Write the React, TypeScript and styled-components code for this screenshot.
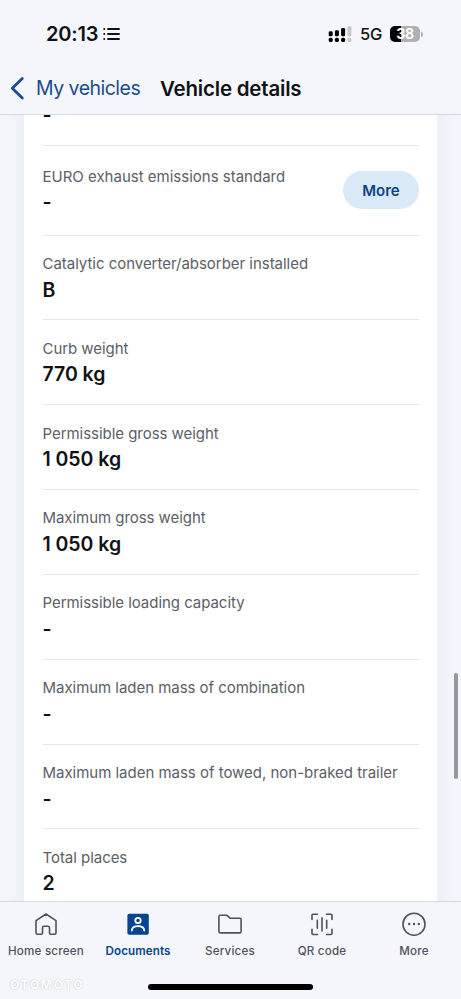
import React from "react";
import styled, { createGlobalStyle } from "styled-components";

const GlobalStyle = createGlobalStyle`
  * { box-sizing: border-box; }
  body { margin: 0; background: #f4f6fb; }
`;

const Screen = styled.div`
  position: relative;
  width: 461px;
  height: 999px;
  overflow: hidden;
  display: flex;
  flex-direction: column;
  background: #f4f6fb;
  color: #101216;
  font-family: Inter, "Liberation Sans", sans-serif;
  white-space: nowrap;
`;

const Header = styled.header`
  flex: none;
  height: 115px;
  border-bottom: 1px solid #d6d8dd;
`;

const StatusBar = styled.div`
  height: 66px;
  padding: 2px 38px 0 46px;
  display: flex;
  align-items: center;
  justify-content: space-between;
`;

const StatusGroup = styled.div`
  display: flex;
  align-items: center;
`;

const Clock = styled.span`
  font-size: 20px;
  font-weight: 600;
  letter-spacing: -0.2px;
  margin-right: 5px;
`;

const Network = styled.span`
  font-size: 16.5px;
  font-weight: 450;
  letter-spacing: -0.3px;
  margin: 0 8px 0 8px;
`;

const Battery = styled.div`
  width: 30px;
  height: 16px;
  border-radius: 5px;
  background: linear-gradient(to right, #000 38%, #b0b1b5 38%);
  color: #fff;
  font-size: 14px;
  font-weight: 700;
  line-height: 16.5px;
  text-align: center;
  letter-spacing: -0.3px;
`;

const BatteryTip = styled.div`
  width: 2px;
  height: 5px;
  margin-left: 1px;
  border-radius: 0 2px 2px 0;
  background: #b0b1b5;
`;

const NavBar = styled.div`
  height: 48px;
  padding: 0 0 4px 10px;
  display: flex;
  align-items: center;
`;

const BackLink = styled.span`
  width: 124px;
  margin-left: 11px;
  color: #194c8a;
  font-size: 19.5px;
  letter-spacing: -0.52px;
`;

const Title = styled.h1`
  margin: 0;
  font-size: 20.5px;
  font-weight: 600;
  letter-spacing: -0.2px;
`;

const Content = styled.main`
  flex: none;
  height: 786px;
  overflow: hidden;
  padding: 0 24px;
`;

const Card = styled.section`
  height: 900px;
  margin-top: -54px;
  padding: 0 18px 0 18.5px;
  background: #fff;
  box-shadow: 0 0 22px rgba(40, 70, 120, 0.07);
`;

const Row = styled.div<{ $height?: number }>`
  height: ${(p) => p.$height ?? 84.83}px;
  display: flex;
  align-items: center;
  justify-content: space-between;
  border-bottom: 1px solid #e4e5e8;
`;

const Field = styled.div`
  display: flex;
  flex-direction: column;
  gap: 2.6px;
  padding-top: 1.6px;
`;

const Label = styled.div<{ $spacing?: number }>`
  height: 20px;
  line-height: 20px;
  font-size: 15px;
  color: #5b5e66;
  letter-spacing: ${(p) => p.$spacing ?? 0}px;
`;

const Value = styled.div`
  height: 26px;
  line-height: 26px;
  font-size: 19.5px;
  font-weight: 600;
  letter-spacing: -0.05px;
`;

const MoreButton = styled.button`
  width: 76px;
  height: 38px;
  padding: 0;
  border: 0;
  border-radius: 19px;
  background: #dae9f8;
  color: #0c4386;
  font: 600 15px Inter, sans-serif;
`;

const TabBar = styled.nav`
  flex: none;
  height: 98px;
  padding-right: 1px;
  border-top: 1px solid #d6d8dd;
  display: flex;
`;

const Tab = styled.div<{ $active?: boolean }>`
  flex: 1;
  padding-top: 10px;
  display: flex;
  flex-direction: column;
  align-items: center;
  color: ${(p) => (p.$active ? "#06448f" : "#4f525b")};
`;

const TabLabel = styled.span<{ $active?: boolean }>`
  margin-top: 7px;
  font-size: 11.6px;
  line-height: 16px;
  font-weight: ${(p) => (p.$active ? 600 : 500)};
  letter-spacing: ${(p) => (p.$active ? 0.1 : 0.22)}px;
`;

const HomeIndicator = styled.div`
  position: absolute;
  left: 148px;
  top: 984px;
  width: 165px;
  height: 6px;
  border-radius: 3px;
  background: #000;
`;

const ScrollThumb = styled.div`
  position: absolute;
  left: 454px;
  top: 673px;
  width: 4px;
  height: 106px;
  border-radius: 2px;
  background: #97989c;
`;

const Watermark = styled.div`
  position: absolute;
  left: 10px;
  top: 977px;
  font-size: 12px;
  line-height: 15px;
  font-weight: 700;
  letter-spacing: 1.7px;
  color: #fff;
  text-shadow: 0 0 1.5px #b4b5bb;
`;

const ListIcon = () => (
  <svg width="17" height="14" viewBox="0 0 17 14" stroke="#101216" strokeWidth="1.9" strokeLinecap="round">
    <path d="M5 2H16M5 7H16M5 12H16M1.2 2H1.3M1.2 7H1.3M1.2 12H1.3" />
  </svg>
);

const SignalIcon = () => (
  <svg width="24" height="17" viewBox="0 0 24 17">
    {[
      [0.7, 5.2],
      [6.9, 4.2],
      [13.1, 2],
      [19.4, 0.3],
    ].map(([x, y], i) => (
      <g key={x} fill={i === 3 ? "#c6c7cb" : "#000"}>
        <rect x={x} y={y} width="4" height={10.2 - y} rx="1.3" />
        <rect x={x} y="11.8" width="4" height="4.2" rx="1.5" />
      </g>
    ))}
  </svg>
);

const BackIcon = () => (
  <svg width="15" height="24" viewBox="0 0 15 24" fill="none" stroke="#194c8a" strokeWidth="2.8" strokeLinecap="round" strokeLinejoin="round">
    <path d="M12.3 2.5L2.3 12.3L12.3 22" />
  </svg>
);

const TabIcon = ({ children }: { children: React.ReactNode }) => (
  <svg width="24" height="24" viewBox="0 0 24 24" fill="none" stroke="currentColor" strokeWidth="1.6" strokeLinecap="round" strokeLinejoin="round">
    {children}
  </svg>
);

const HomeIcon = () => (
  <TabIcon>
    <path d="M2 8.6L12 2L22 8.6V20.8Q22 22.2 20.6 22.2H16.7Q15.5 22.2 15.5 21V15.8Q15.5 14.3 14 14.3H10Q8.5 14.3 8.5 15.8V21Q8.5 22.2 7.3 22.2H3.4Q2 22.2 2 20.8Z" />
  </TabIcon>
);

const DocumentsIcon = () => (
  <TabIcon>
    <rect x="1.4" y="1.7" width="21.4" height="21" rx="1.8" fill="#06448f" stroke="none" />
    <circle cx="12" cy="8.5" r="2.7" stroke="#fff" strokeWidth="1.8" />
    <path d="M5.7 18.6C6 15.5 8.4 14.2 12 14.2S18 15.5 18.3 18.6" stroke="#fff" strokeWidth="1.8" />
  </TabIcon>
);

const FolderIcon = () => (
  <TabIcon>
    <path d="M0.9 4.7Q0.9 3.2 2.4 3.2H8.7L12 6.2H21.7Q23.1 6.2 23.1 7.6V19.4Q23.1 20.9 21.7 20.9H2.4Q0.9 20.9 0.9 19.4Z" />
  </TabIcon>
);

const CodeIcon = () => (
  <TabIcon>
    <path d="M2 7.5V3.2Q2 2.2 3 2.2H7.5M16.5 2.2H21Q22 2.2 22 3.2V7.5M22 17.3V21.5Q22 22.5 21 22.5H16.5M7.5 22.5H3Q2 22.5 2 21.5V17.3M7.3 8.3V16.3M12 5.8V19M16.7 8.3V16.3" />
  </TabIcon>
);

const MoreIcon = () => (
  <TabIcon>
    <circle cx="12" cy="12.2" r="11" />
    <g fill="currentColor" stroke="none">
      <circle cx="7.2" cy="12" r="1.2" />
      <circle cx="12" cy="12" r="1.2" />
      <circle cx="16.8" cy="12" r="1.2" />
    </g>
  </TabIcon>
);

const fields = [
  { label: "Catalytic converter/absorber installed", value: "B", spacing: -0.03 },
  { label: "Curb weight", value: "770 kg", spacing: -0.05 },
  { label: "Permissible gross weight", value: "1 050 kg", spacing: -0.04 },
  { label: "Maximum gross weight", value: "1 050 kg", spacing: -0.05 },
  { label: "Permissible loading capacity", value: "-", spacing: -0.04 },
  { label: "Maximum laden mass of combination", value: "-", spacing: -0.04 },
  { label: "Maximum laden mass of towed, non-braked trailer", value: "-", spacing: -0.02 },
  { label: "Total places", value: "2", spacing: -0.04 },
];

const tabs = [
  { label: "Home screen", Icon: HomeIcon },
  { label: "Documents", Icon: DocumentsIcon, active: true },
  { label: "Services", Icon: FolderIcon },
  { label: "QR code", Icon: CodeIcon },
  { label: "More", Icon: MoreIcon },
];

export default function App() {
  return (
    <>
      <GlobalStyle />
      <Screen>
        <Header>
          <StatusBar>
            <StatusGroup>
              <Clock>20:13</Clock>
              <ListIcon />
            </StatusGroup>
            <StatusGroup>
              <SignalIcon />
              <Network>5G</Network>
              <Battery>38</Battery>
              <BatteryTip />
            </StatusGroup>
          </StatusBar>
          <NavBar>
            <BackIcon />
            <BackLink>My vehicles</BackLink>
            <Title>Vehicle details</Title>
          </NavBar>
        </Header>
        <Content>
          <Card>
            <Row $height={85}>
              <Field>
                <Label />
                <Value>-</Value>
              </Field>
            </Row>
            <Row $height={89.6}>
              <Field>
                <Label>EURO exhaust emissions standard</Label>
                <Value>-</Value>
              </Field>
              <MoreButton>More</MoreButton>
            </Row>
            {fields.map((field) => (
              <Row key={field.label}>
                <Field>
                  <Label $spacing={field.spacing}>{field.label}</Label>
                  <Value>{field.value}</Value>
                </Field>
              </Row>
            ))}
          </Card>
        </Content>
        <TabBar>
          {tabs.map(({ label, Icon, active }) => (
            <Tab key={label} $active={active}>
              <Icon />
              <TabLabel $active={active}>{label}</TabLabel>
            </Tab>
          ))}
        </TabBar>
        <ScrollThumb />
        <HomeIndicator />
        <Watermark>OTOMOTO</Watermark>
      </Screen>
    </>
  );
}
